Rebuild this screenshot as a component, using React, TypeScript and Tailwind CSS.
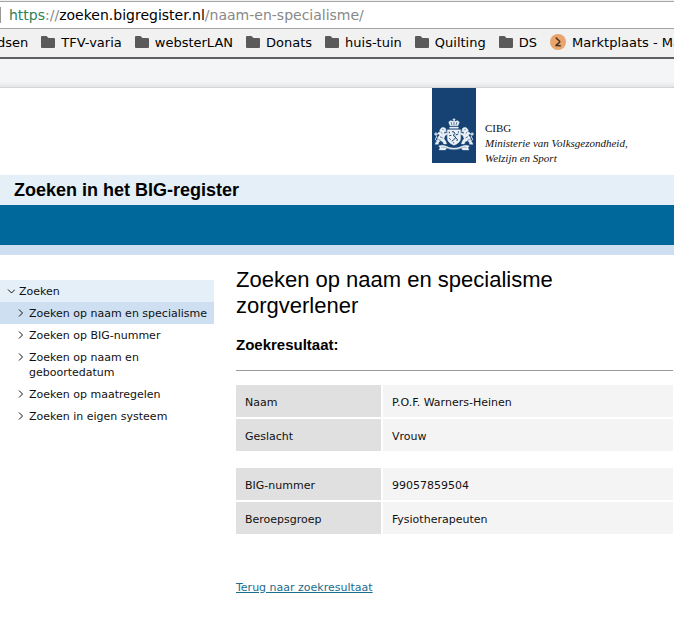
import type { ReactNode } from 'react'

const bookmarks = ['TFV-varia', 'websterLAN', 'Donats', 'huis-tuin', 'Quilting', 'DS']

const menu = [
  { label: 'Zoeken op naam en specialisme', active: true },
  { label: 'Zoeken op BIG-nummer', active: false },
  { label: 'Zoeken op naam en geboortedatum', active: false },
  { label: 'Zoeken op maatregelen', active: false },
  { label: 'Zoeken in eigen systeem', active: false },
]

const person = [
  { label: 'Naam', value: 'P.O.F. Warners-Heinen' },
  { label: 'Geslacht', value: 'Vrouw' },
]

const registration = [
  { label: 'BIG-nummer', value: '99057859504' },
  { label: 'Beroepsgroep', value: 'Fysiotherapeuten' },
]

function FolderIcon() {
  return (
    <svg width="14" height="12" viewBox="0 0 14 12" className="shrink-0" fill="#5a5a5a" aria-hidden="true">
      <path d="M1 0h4.500l2 2H13a1 1 0 0 1 1 1v8a1 1 0 0 1-1 1H1a1 1 0 0 1-1-1V1a1 1 0 0 1 1-1z" />
    </svg>
  )
}

function MarktplaatsIcon() {
  return (
    <svg width="16" height="16" viewBox="0 0 16 16" className="shrink-0" aria-hidden="true">
      <circle cx="8" cy="8" r="8" fill="#e9a56c" />
      <path d="M6 3.500C6.500 5.500 9.500 6 9.800 7.500C9.800 9 7.500 9.500 6 11.300M5.300 11.900C7 10.800 8.500 12.300 10.800 11.500" fill="none" stroke="#473426" strokeWidth="1.500" />
    </svg>
  )
}

function Chevron({ down = false }: { down?: boolean }) {
  return (
    <svg width="8" height="8" viewBox="0 0 8 8" className="mt-[3px] shrink-0" fill="none" stroke="#111" aria-hidden="true">
      <path d={down ? 'M1 2.500L4.500 6L8 2.500' : 'M2 .5L5.500 4L2 7.500'} />
    </svg>
  )
}

// one heraldic lion, facing the shield; mirrored for the right side
function Lion() {
  return (
    <g>
      <path d="M27 121l5-3 6 1 4 4-1 4 3 3-5 2-3-1 1 6 8-3 2 4-8 5-3 9 5 7 3 9h-9l-2-6-7-4-6 5-1 6H9l2-5 5-6 1-9 6-8-4-3-6 3-4-2 2-3 5 1 5-5 3 1-1-6z" />
      <path d="M20 158c-8 2-12-3-8-8 3-4 2-7-1-8-4-2-3-8 2-8" fill="none" strokeWidth="3" />
      <path d="M31 124l4 1M26 132l5 5M24 146l8 4M19 155l7 2" fill="none" stroke="#154273" strokeWidth="2" />
    </g>
  )
}

function Logo() {
  return (
    <svg width="44" height="75" viewBox="0 0 132 225" className="shrink-0" role="img" aria-label="Rijksoverheid">
      <rect width="132" height="225" fill="#154273" />
      <g fill="#e9f0f6" stroke="#e9f0f6" strokeWidth="1">
        <path d="M66 91v9M62 95h8" strokeWidth="3" />
        <path d="M54 113l-4-10c2-5 8-6 12-3l4-2 4 2c4-3 10-2 12 3l-4 10z" />
        <path d="M53 117h26v4H53z" />
        <path d="M57 102l3 9M66 101v10M75 102l-3 9" stroke="#154273" strokeWidth="2" />
        <Lion />
        <g transform="translate(132 0) scale(-1 1)">
          <Lion />
        </g>
        <path d="M46 125h40v25c0 12-11 18-20 22-9-4-20-10-20-22z" />
        <g fill="none" stroke="#154273" strokeWidth="3">
          <path d="M60 131l6 1 3 5-6 5 8 5-3 6-9 7M71 141l8-3M70 149l6 5-1 5" />
          <path d="M52 131v5M79 130v4M52 151l4 4M52 143l6-1M65 163v3" />
        </g>
        <path d="M20 174c12-5 22 0 30 4 10 3 22 3 32 0 8-4 18-9 30-4l-4 5 3 7H92l-4-5c-14 5-30 5-44 0l-4 5H21l3-7z" />
        <path d="M28 179c8-3 14 0 20 3 12 3 24 3 36 0 6-3 12-6 20-3" fill="none" stroke="#154273" strokeWidth="1" />
      </g>
    </svg>
  )
}

function BookmarkLink({ icon, children }: { icon?: ReactNode; children: ReactNode }) {
  return (
    <a href="#" className="flex shrink-0 items-center gap-[6px]">
      {icon}
      {children}
    </a>
  )
}

function DataTable({ rows }: { rows: { label: string; value: string }[] }) {
  return (
    <table className="w-full border-separate border-spacing-0">
      <tbody>
        {rows.map((row) => (
          <tr key={row.label}>
            <th
              scope="row"
              className="h-[34px] w-[147px] border-r-2 border-b-2 border-white bg-[#e0e0e0] px-[9px] pt-0.5 text-left font-normal"
            >
              {row.label}
            </th>
            <td className="border-b-2 border-white bg-[#f4f4f4] px-[9px] pt-0.5">{row.value}</td>
          </tr>
        ))}
      </tbody>
    </table>
  )
}

export default function App() {
  return (
    <div className="min-h-screen overflow-hidden bg-white font-['DejaVu_Sans',sans-serif] text-[11px] leading-[15px] text-[#111]">
      <div className="border-b border-[#a5a5a5] bg-[#f1f1f1] pt-px">
        <div className="flex h-[27px] items-center border-t border-[#a5a5a5] bg-white">
          <span className="h-4 w-px bg-[#999]" />
          <div
            role="textbox"
            aria-label="Adres"
            contentEditable
            suppressContentEditableWarning
            className="flex-1 pl-2 text-[14px] leading-5 whitespace-nowrap text-[#888] outline-none"
          >
            <span className="text-[#2d8159]">https</span>://<span className="text-black">zoeken.bigregister.nl</span>
            /naam-en-specialisme/
          </div>
        </div>
      </div>

      <nav className="flex h-[30px] items-center gap-[13px] overflow-hidden border-b-2 border-[#5c6062] bg-[#f1f1f1] pb-0.5 text-[13px] whitespace-nowrap text-black">
        <div className="-ml-[3px]">
          <BookmarkLink>dsen</BookmarkLink>
        </div>
        {bookmarks.map((name) => (
          <BookmarkLink key={name} icon={<FolderIcon />}>
            {name}
          </BookmarkLink>
        ))}
        <BookmarkLink icon={<MarktplaatsIcon />}>Marktplaats - Ma</BookmarkLink>
      </nav>

      <div className="h-[29px] border-b border-[#d4d4d4] bg-linear-to-b from-[#f3f5f7] from-80% to-[#e4e5e6]" />

      <header>
        <div className="flex h-[87px] gap-[9px] pl-[432px]">
          <Logo />
          <p className="pt-[33px] font-['Liberation_Serif',serif] text-[11px] whitespace-nowrap">
            CIBG
            <br />
            <em>
              Ministerie van Volksgezondheid,
              <br />
              Welzijn en Sport
            </em>
          </p>
        </div>
        <div className="bg-[#e4eff7] px-[14px] font-['Liberation_Sans',sans-serif] text-[18px] leading-[30px] font-bold text-black">
          Zoeken in het BIG-register
        </div>
        <div className="h-[50px] border-b-10 border-[#cddff0] bg-[#01689b]" />
      </header>

      <div className="flex gap-[22px]">
        <nav className="w-[214px] shrink-0 pt-[25px]">
          <a href="#" className="flex gap-1 bg-[#e4eff7] pt-1 pr-[7px] pb-[3px] pl-[7px]">
            <Chevron down />
            Zoeken
          </a>
          <ul>
            {menu.map((item) => (
              <li key={item.label}>
                <a href="#" className={`flex gap-1 pt-1 pr-[7px] pb-[3px] pl-[17px] ${item.active ? 'bg-[#cddff0]' : ''}`}>
                  <Chevron />
                  {item.label}
                </a>
              </li>
            ))}
          </ul>
        </nav>

        <main className="min-w-0 flex-1 pt-3 pr-px">
          <h1 className="max-w-[360px] font-['Liberation_Sans',sans-serif] text-[22px] leading-[26px] text-black">
            Zoeken op naam en specialisme zorgverlener
          </h1>
          <h2 className="mt-4 font-['Liberation_Sans',sans-serif] text-[15px] leading-5 font-bold text-black">
            Zoekresultaat:
          </h2>
          <hr className="mt-[15px] mb-[14px] border-[#999]" />
          <DataTable rows={person} />
          <div className="h-[15px]" />
          <DataTable rows={registration} />
          <a href="#" className="mt-11 inline-block text-[#1c6c8c] underline">
            Terug naar zoekresultaat
          </a>
        </main>
      </div>
    </div>
  )
}
